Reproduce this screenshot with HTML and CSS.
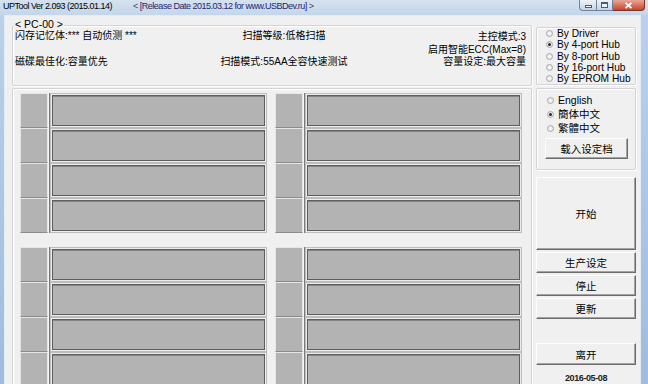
FILE: index.html
```html
<!DOCTYPE html>
<html lang="zh-CN">
<head>
    <meta charset="UTF-8">
    <meta name="viewport" content="width=device-width, initial-scale=1.0">
    <title>UPTool Ver 2.093</title>
    <link rel="stylesheet" href="styles.css">
</head>
<body>
<div class="window">
    <div class="titlebar">
        <span class="title">UPTool Ver 2.093 (2015.01.14)</span>
        <span class="subtitle">&lt; <span class="release">[Release Date 2015.03.12 for www.USBDev.ru]</span> &gt;</span>
        <div class="controls">
            <span class="ctl min"><i></i></span>
            <span class="ctl max"><i></i></span>
            <span class="ctl close">
                <svg width="9" height="7" viewBox="0 0 9 7"><path d="M1.5 0.8 L7.5 6.2 M7.5 0.8 L1.5 6.2" stroke="#fff" stroke-width="1.8" fill="none"/></svg>
            </span>
        </div>
    </div>
    <div class="frame">
        <div class="client">
            <div class="main">
                <div class="group info">
                    <span class="group-title">&lt; PC-00 &gt;</span>
                    <div class="col col-left">
                        <span>闪存记忆体:*** 自动侦测 ***</span>
                        <span class="line2">磁碟最佳化:容量优先</span>
                    </div>
                    <div class="col col-mid">
                        <span>扫描等级:低格扫描</span>
                        <span class="line2">扫描模式:55AA全容快速测试</span>
                    </div>
                    <div class="col col-right">
                        <span>主控模式:3</span>
                        <span>启用智能ECC(Max=8)</span>
                        <span>容量设定:最大容量</span>
                    </div>
                </div>
                <div class="group ports">
                    <div class="bank">
                        <div class="port"><div class="slot"></div><div class="bar"></div></div>
                        <div class="port"><div class="slot"></div><div class="bar"></div></div>
                        <div class="port"><div class="slot"></div><div class="bar"></div></div>
                        <div class="port"><div class="slot"></div><div class="bar"></div></div>
                        <div class="port"><div class="slot"></div><div class="bar"></div></div>
                        <div class="port"><div class="slot"></div><div class="bar"></div></div>
                        <div class="port"><div class="slot"></div><div class="bar"></div></div>
                        <div class="port"><div class="slot"></div><div class="bar"></div></div>
                    </div>
                    <div class="bank">
                        <div class="port"><div class="slot"></div><div class="bar"></div></div>
                        <div class="port"><div class="slot"></div><div class="bar"></div></div>
                        <div class="port"><div class="slot"></div><div class="bar"></div></div>
                        <div class="port"><div class="slot"></div><div class="bar"></div></div>
                        <div class="port"><div class="slot"></div><div class="bar"></div></div>
                        <div class="port"><div class="slot"></div><div class="bar"></div></div>
                        <div class="port"><div class="slot"></div><div class="bar"></div></div>
                        <div class="port"><div class="slot"></div><div class="bar"></div></div>
                    </div>
                </div>
            </div>
            <div class="side">
                <div class="group hubs">
                    <label class="radio"><span class="dot"></span>By Driver</label>
                    <label class="radio"><span class="dot on"></span>By 4-port Hub</label>
                    <label class="radio"><span class="dot"></span>By 8-port Hub</label>
                    <label class="radio"><span class="dot"></span>By 16-port Hub</label>
                    <label class="radio"><span class="dot"></span>By EPROM Hub</label>
                </div>
                <div class="group langs">
                    <label class="radio"><span class="dot"></span>English</label>
                    <label class="radio"><span class="dot on"></span>簡体中文</label>
                    <label class="radio"><span class="dot"></span>繁體中文</label>
                    <button class="btn load">载入设定档</button>
                </div>
                <button class="btn start">开始</button>
                <button class="btn small">生产设定</button>
                <button class="btn small">停止</button>
                <button class="btn small">更新</button>
                <button class="btn exit">离开</button>
                <div class="date">2016-05-08</div>
            </div>
        </div>
    </div>
</div>
</body>
</html>
```

FILE: styles.css
```css
* {
    box-sizing: border-box;
}
body {
    margin: 0;
    width: 648px;
    height: 384px;
    overflow: hidden;
    font-family: "Liberation Sans", "Noto Sans CJK SC", sans-serif;
    font-size: 11px;
    color: #000;
}
.window {
    width: 648px;
    height: 384px;
    display: flex;
    flex-direction: column;
    overflow: hidden;
    background: linear-gradient(to bottom, #bcd2ea, #9fbbdd);
}
.titlebar {
    height: 15px;
    flex-shrink: 0;
    display: flex;
    align-items: flex-start;
    padding-left: 3px;
    background: linear-gradient(to bottom, #d5e2ef, #c3d6ea);
}
.title,
.subtitle {
    font-size: 9px;
    letter-spacing: -0.5px;
    line-height: 12px;
    white-space: nowrap;
}
.subtitle {
    margin-left: 21px;
    color: #444;
}
.release {
    color: #27246c;
}
.controls {
    margin-left: auto;
    margin-right: 3px;
    display: flex;
    flex-shrink: 0;
    height: 11px;
}
.ctl {
    flex-shrink: 0;
    height: 11px;
    display: flex;
    align-items: center;
    justify-content: center;
    border: 1px solid #6f829c;
    border-top: none;
    background: linear-gradient(to bottom, #eef3f9, #c4d3e5);
}
.min {
    width: 18px;
    border-radius: 0 0 0 4px;
}
.min i {
    width: 7px;
    height: 3px;
    margin-top: 3px;
    background: #fff;
    border: 1px solid #4a5a70;
}
.max {
    width: 16px;
    border-left: none;
}
.max i {
    width: 7px;
    height: 6px;
    border: 1px solid #4a5a70;
    border-top-width: 2px;
    background: #eef3f9;
}
.close {
    width: 32px;
    border-left: none;
    border-color: #7c3126;
    border-radius: 0 0 4px 0;
    background: linear-gradient(to bottom, #e9a696, #c7452f);
}
.frame {
    flex: 1;
    min-height: 0;
    display: flex;
    padding: 0 7px 0 4px;
}
.client {
    flex: 1;
    display: flex;
    gap: 4px;
    padding: 0 4px 0 7px;
    background: #f0f0f0;
    border: 1px solid #e4ebf3;
    border-bottom: none;
}
.main {
    width: 520px;
    display: flex;
    flex-direction: column;
}
.side {
    width: 100px;
    display: flex;
    flex-direction: column;
    padding-top: 11px;
}
.group {
    position: relative;
    flex-shrink: 0;
    border: 1px solid #d3d3d3;
    border-radius: 2px;
    box-shadow: inset 1px 1px #fff, 1px 1px #fff;
}
.group-title {
    position: absolute;
    top: -7px;
    left: 1px;
    padding: 0 1px;
    background: #f0f0f0;
    font-size: 10.5px;
    line-height: 10px;
}
.info {
    margin-top: 9px;
    height: 61px;
    display: grid;
    grid-template-columns: 185px 168px 1fr;
    padding: 0 5px 0 2px;
    font-size: 10px;
}
.col {
    display: flex;
    flex-direction: column;
    white-space: nowrap;
    padding-top: 4px;
    line-height: 11px;
}
.col .line2 {
    margin-top: 14.5px;
}
.col-mid {
    align-items: center;
}
.col-right {
    align-items: flex-end;
    padding-top: 5px;
    line-height: 12.5px;
}
.ports {
    margin-top: 2px;
    height: 330px;
    padding: 4px 9px 0 7px;
}
.bank {
    display: grid;
    grid-template-columns: 247px 247px;
    grid-template-rows: repeat(4, 35px);
    grid-auto-flow: column;
    column-gap: 8px;
}
.bank + .bank {
    margin-top: 14px;
}
.port {
    display: grid;
    grid-template-columns: 28px 1fr;
    column-gap: 2px;
}
.slot {
    background: #b3b3b3;
    border: 1px solid #e6e6e6;
    border-bottom-color: #8b8b8b;
    box-shadow: 1px 0 #f4f4f4, 2px 0 #7a7a7a;
}
.bar {
    background: #b3b3b3;
    border: 1px solid #bdbdbd;
    box-shadow: inset 0 0 0 1px #ececec, inset 0 0 0 2px #5e5e5e, inset 0 3px #858585;
}
.radio {
    display: flex;
    align-items: center;
    gap: 4px;
    white-space: nowrap;
}
.dot {
    position: relative;
    flex-shrink: 0;
    width: 7px;
    height: 7px;
    border-radius: 50%;
    border: 1px solid #a9a9a9;
    background: radial-gradient(#ffffff, #dadada);
}
.dot.on::after {
    content: "";
    position: absolute;
    left: 1px;
    top: 1px;
    width: 3px;
    height: 3px;
    border-radius: 50%;
    background: #262626;
}
.hubs {
    height: 58px;
    padding-left: 9px;
    font-size: 10.2px;
    line-height: 11.3px;
}
.langs {
    margin-top: 3px;
    height: 82px;
    padding: 4px 0 0 10px;
    line-height: 14px;
    font-size: 10.5px;
}
.btn {
    display: flex;
    align-items: center;
    justify-content: center;
    padding: 0;
    background: #f0f0f0;
    border: 1px solid;
    border-color: #fdfdfd #6b6b6b #6b6b6b #fdfdfd;
    box-shadow: inset -1px -1px #a3a3a3;
    font-family: "Liberation Sans", "Noto Sans CJK SC", sans-serif;
    font-size: 10.5px;
    color: #000;
}
.load {
    margin: 3px 0 0 -2px;
    width: 83px;
    height: 21px;
}
.start {
    margin-top: 7px;
    height: 73px;
}
.small {
    margin-top: 2px;
    height: 21px;
}
.exit {
    margin-top: 24px;
    height: 22px;
}
.date {
    margin-top: 8px;
    text-align: center;
    font-size: 9px;
    font-weight: bold;
    letter-spacing: -0.4px;
    line-height: 10px;
    color: #222;
}
```
